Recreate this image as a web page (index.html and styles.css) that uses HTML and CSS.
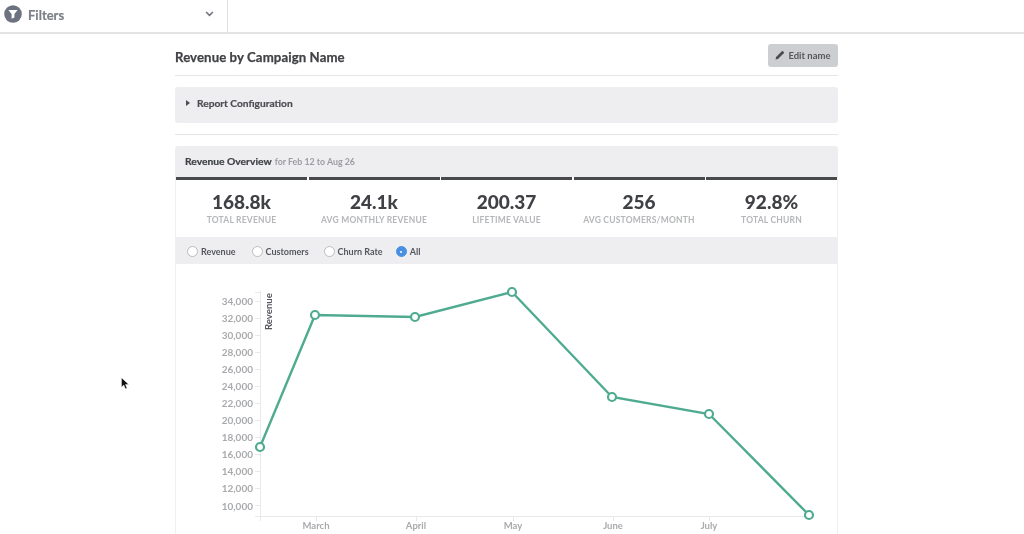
FILE: index.html
```html
<!DOCTYPE html>
<html lang="en">
<head>
<meta charset="utf-8">
<title>Revenue by Campaign Name</title>
<link rel="stylesheet" href="styles.css">
</head>
<body>
<div class="page">
<header class="topbar">
  <div class="filters">
    <svg class="filter-icon" viewBox="0 0 18 18" width="18" height="18" aria-hidden="true">
      <circle cx="9" cy="9" r="8.8" fill="#6d7280"/>
      <path d="M4.4 5h9.2L10.4 9v3.6L7.6 13.8V9z" fill="#fff"/>
    </svg>
    <span class="filters-label">Filters</span>
    <svg class="chevron" viewBox="0 0 10 7" width="9" height="6" aria-hidden="true">
      <path d="M1 1.2l4 3.8 4-3.8" fill="none" stroke="#70747c" stroke-width="1.9"/>
    </svg>
  </div>
</header>

<main class="report">
  <div class="title-row">
    <h1 class="title">Revenue by Campaign Name</h1>
    <button class="edit-btn" type="button">
      <svg viewBox="0 0 12 12" width="10" height="10" aria-hidden="true">
        <path d="M0.6 11.4l0.7-3L8.2 1.5a1 1 0 0 1 1.4 0l0.9 0.9a1 1 0 0 1 0 1.4L3.6 10.7z" fill="#4a4c52"/>
      </svg>
      Edit name
    </button>
  </div>

  <section class="config">
    <span class="caret"></span>
    <span class="config-label">Report Configuration</span>
  </section>

  <section class="card">
    <div class="card-head">
      <span class="card-title">Revenue Overview</span>
      <span class="card-range">for Feb 12 to Aug 26</span>
    </div>

    <div class="stats">
      <div class="stat"><div class="stat-value">168.8k</div><div class="stat-label">TOTAL REVENUE</div></div>
      <div class="stat"><div class="stat-value">24.1k</div><div class="stat-label">AVG MONTHLY REVENUE</div></div>
      <div class="stat"><div class="stat-value">200.37</div><div class="stat-label">LIFETIME VALUE</div></div>
      <div class="stat"><div class="stat-value">256</div><div class="stat-label">AVG CUSTOMERS/MONTH</div></div>
      <div class="stat"><div class="stat-value">92.8%</div><div class="stat-label">TOTAL CHURN</div></div>
    </div>

    <div class="radios">
      <span class="radio"><i class="dot"></i>Revenue</span>
      <span class="radio"><i class="dot"></i>Customers</span>
      <span class="radio"><i class="dot"></i>Churn Rate</span>
      <span class="radio"><i class="dot dot-on"></i>All</span>
    </div>

    <svg class="chart" viewBox="176 264 660 270" width="660" height="270" role="img" aria-label="Revenue line chart">
      <g class="axis-lines">
        <path d="M260.5 291V516.5H810"/>
        <path d="M255 292.5h5M255 301.5h5M255 318.5h5M255 335.5h5M255 352.5h5M255 369.5h5M255 386.5h5M255 403.5h5M255 420.5h5M255 437.5h5M255 454.5h5M255 471.5h5M255 488.5h5M255 505.5h5M255 516.5h5"/>
        <path d="M260.5 516v5M316.5 516v5M416.5 516v5M513.5 516v5M613.5 516v5M709.5 516v5"/>
      </g>
      <g class="y-labels">
        <text x="253" y="305">34,000</text>
        <text x="253" y="322">32,000</text>
        <text x="253" y="339">30,000</text>
        <text x="253" y="356">28,000</text>
        <text x="253" y="373">26,000</text>
        <text x="253" y="390">24,000</text>
        <text x="253" y="407">22,000</text>
        <text x="253" y="424">20,000</text>
        <text x="253" y="441">18,000</text>
        <text x="253" y="458">16,000</text>
        <text x="253" y="475">14,000</text>
        <text x="253" y="492">12,000</text>
        <text x="253" y="510">10,000</text>
      </g>
      <g class="x-labels">
        <text x="316" y="529">March</text>
        <text x="416" y="529">April</text>
        <text x="513" y="529">May</text>
        <text x="613" y="529">June</text>
        <text x="709" y="529">July</text>
      </g>
      <text class="axis-title" transform="translate(271.5 330) rotate(-90)">Revenue</text>
      <polyline class="line" points="260,447 315,315 415,317 512,292 612,397 709,414 809,515"/>
      <g class="points">
        <circle cx="260" cy="447" r="4"/>
        <circle cx="315" cy="315" r="4"/>
        <circle cx="415" cy="317" r="4"/>
        <circle cx="512" cy="292" r="4"/>
        <circle cx="612" cy="397" r="4"/>
        <circle cx="709" cy="414" r="4"/>
        <circle cx="809" cy="515" r="4"/>
      </g>
    </svg>
  </section>
</main>

<svg class="cursor" viewBox="0 0 10 15" width="9" height="14" aria-hidden="true">
  <path d="M0.5 0.5V11l2.6-2.3 1.7 4.2 1.9-.8L5 8h3.6z" fill="#111" stroke="#fff" stroke-width="0.5"/>
</svg>
</div>
</body>
</html>
```

FILE: styles.css
```css
* { box-sizing: border-box; }
html, body { margin: 0; height: 534px; overflow: hidden; background: #fff; }
body { font-family: Lato, "Open Sans", Arial, sans-serif; color: #3f4145; }
.page { position: relative; height: 534px; overflow: hidden; filter: blur(.4px); }

.topbar { height: 34px; border-bottom: 2px solid #e2e3e5; display: flex; }
.filters { width: 228px; padding: 0 10px 0 4px; border-right: 1px solid #dfe0e2; display: flex; align-items: center; }
.filter-icon { flex: none; margin-top: -4px; }
.filters-label { margin-left: 6px; margin-top: -2px; font-size: 13px; font-weight: 700; color: #7c7f86; flex: 1; -webkit-text-stroke: .2px #7c7f86; }
.chevron { margin-top: -4px; margin-right: 3px; }

.report { width: 663px; margin-left: 175px; }
.title-row { height: 42px; border-bottom: 1px solid #e4e5e7; display: flex; align-items: center; justify-content: space-between; padding-top: 4px; }
.title { margin: 0; font-size: 13.2px; font-weight: 700; color: #414246; letter-spacing: .1px; -webkit-text-stroke: .25px #414246; }
.edit-btn { width: 70px; height: 23px; border: 0; border-radius: 3px; background: #ccced2; color: #55575d; font: 700 9.5px Lato, sans-serif; display: flex; align-items: center; justify-content: center; gap: 3px; padding: 0; margin-top: -3px; }

.config { margin-top: 11px; height: 36px; border-radius: 3px; background: #eeeef0; display: flex; align-items: center; padding-left: 11px; padding-bottom: 4px; }
.caret { width: 0; height: 0; border-left: 4px solid #4b4d52; border-top: 3px solid transparent; border-bottom: 3px solid transparent; }
.config-label { margin-left: 7px; font-size: 10.2px; font-weight: 700; color: #4b4d52; -webkit-text-stroke: .2px #4b4d52; }

.card { position: relative; margin-top: 11px; border-top: 1px solid #e4e5e7; padding-top: 11px; }
.card::after { content: ""; position: absolute; inset: 42px 0 0; border-left: 1px solid #f0f0f2; border-right: 1px solid #f0f0f2; pointer-events: none; }
.card-head { height: 31px; background: #eeeef0; border-radius: 3px 3px 0 0; display: flex; align-items: center; padding-left: 10px; gap: 3px; padding-bottom: 1px; }
.card-title { font-size: 10.3px; font-weight: 700; color: #3f4145; -webkit-text-stroke: .2px #3f4145; }
.card-range { font-size: 8.8px; font-weight: 700; color: #9c9da1; }

.stats { display: grid; grid-template-columns: repeat(5, 1fr); gap: 0 1.5px; padding: 0 1px; height: 60px; background: #fff; }
.stat { border-top: 3px solid #48494d; text-align: center; padding-top: 10.5px; }
.stat-value { font-size: 19px; line-height: 22px; font-weight: 900; color: #3f4145; }
.stat-label { font-size: 8.5px; line-height: 12px; margin-top: 1.5px; font-weight: 700; color: #b5b6b9; letter-spacing: .2px; }

.radios { height: 27px; background: #eeeef0; display: flex; align-items: center; padding-left: 12px; padding-top: 2px; }
.radio { display: flex; align-items: center; gap: 3px; font-size: 9px; font-weight: 700; color: #55575d; margin-right: 16px; }
.radio:nth-child(2) { margin-right: 15px; }
.radio:nth-child(3) { margin-right: 13px; }
.dot { width: 11px; height: 11px; border-radius: 50%; background: #fff; border: 1px solid #b9bbc0; position: relative; }
.dot-on { background: #4a90e2; border-color: #4a90e2; }
.dot-on::after { content: ""; position: absolute; left: 3.5px; top: 3.5px; width: 2px; height: 2px; border-radius: 50%; background: #fff; }

.chart { display: block; margin-left: 1px; background: #fff; }
.axis-lines path { fill: none; stroke: #e8e9eb; stroke-width: 1; }
.y-labels text { font: 700 10px Lato, sans-serif; fill: #a9aaad; text-anchor: end; }
.x-labels text { font: 700 9.5px Lato, sans-serif; fill: #a9aaad; text-anchor: middle; }
.axis-title { font: 700 9.6px Lato, sans-serif; fill: #55575d; text-anchor: start; }
.line { fill: none; stroke: #4fab90; stroke-width: 2.4; }
.points circle { fill: #fff; stroke: #4fab90; stroke-width: 2.2; }

.cursor { position: absolute; left: 121px; top: 377px; }
```
